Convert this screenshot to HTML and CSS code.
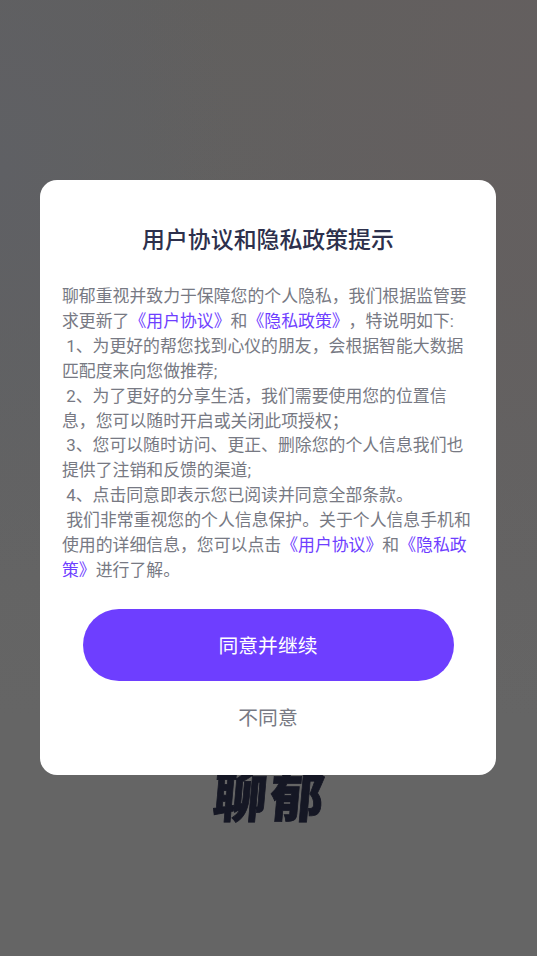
FILE: index.html
```html
<!DOCTYPE html>
<html lang="zh-CN">
<head>
<meta charset="utf-8">
<title>聊郁</title>
<link rel="stylesheet" href="styles.css">
</head>
<body>
<div class="splash"><div class="brand">聊郁</div></div>
<main class="overlay">
  <section class="dialog">
    <h1 class="title">用户协议和隐私政策提示</h1>
    <div class="terms">
      <p>聊郁重视并致力于保障您的个人隐私，我们根据监管要<br>求更新了<a>《用户协议》</a>和<a>《隐私政策》</a>，特说明如下:</p>
      <p> 1、为更好的帮您找到心仪的朋友，会根据智能大数据<br>匹配度来向您做推荐;</p>
      <p> 2、为了更好的分享生活，我们需要使用您的位置信<br>息，您可以随时开启或关闭此项授权；</p>
      <p> 3、您可以随时访问、更正、删除您的个人信息我们也<br>提供了注销和反馈的渠道;</p>
      <p> 4、点击同意即表示您已阅读并同意全部条款。</p>
      <p> 我们非常重视您的个人信息保护。关于个人信息手机和<br>使用的详细信息，您可以点击<a>《用户协议》</a>和<a>《隐私政<br>策》</a>进行了解。</p>
    </div>
    <button class="agree">同意并继续</button>
    <button class="decline">不同意</button>
  </section>
</main>
</body>
</html>
```
FILE: styles.css
```css
* { box-sizing: border-box; }
body {
  margin: 0;
  height: 956px;
  overflow: hidden;
  position: relative;
  font-family: Roboto, "Noto Sans CJK SC", sans-serif;
  text-spacing-trim: space-all;
  background:
    radial-gradient(ellipse 230px 420px at 0 170px, #5f6064 0, rgba(95, 96, 100, 0) 100%),
    radial-gradient(ellipse 400px 620px at 100% 100px, #645f5f 0, rgba(100, 95, 95, 0) 100%),
    linear-gradient(#605f5e 0, #636363 45%, #656565 75%, #656565 100%);
}
.splash {
  position: absolute;
  inset: 0;
  display: flex;
  justify-content: center;
  align-items: flex-end;
  padding-bottom: 127px;
}
.brand {
  font-size: 54px;
  line-height: 60px;
  font-weight: 900;
  letter-spacing: 3px;
  color: #151724;
  -webkit-text-stroke: 0.8px #151724;
  transform: translateX(1px) skewX(-5deg);
}
.overlay {
  position: relative;
  height: 100%;
  padding: 180px 41px 0 40px;
}
.dialog {
  height: 595px;
  padding: 44px 22px 0;
  border-radius: 17px;
  background: #fff;
  display: flex;
  flex-direction: column;
  align-items: center;
}
.title {
  margin: 0;
  font-size: 22.9px;
  line-height: 34px;
  font-weight: 500;
  color: #2d304c;
}
.terms {
  align-self: stretch;
  margin-top: 26px;
  font-size: 16.88px;
  line-height: 24.9px;
  color: #777983;
  white-space: nowrap;
}
.terms p { margin: 0; white-space: pre; }
.terms a { color: #6e3eff; }
button {
  border: 0;
  padding: 0;
  font-family: inherit;
  font-size: 19.8px;
}
.agree {
  width: 371px;
  height: 72px;
  margin-top: 26px;
  border-radius: 36px;
  background: #6e3eff;
  color: #fff;
}
.decline {
  height: 32px;
  margin-top: 20px;
  background: none;
  color: #777983;
}
```
